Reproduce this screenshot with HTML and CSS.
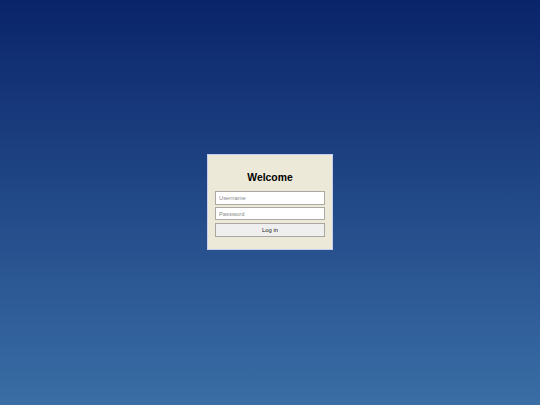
FILE: index.html
```html
<!DOCTYPE html>
<html>
<head>
<meta charset="utf-8">
<link rel="stylesheet" href="styles.css">
</head>
<body>
<div class="screen">
  <form class="card">
    <h2 class="title">Welcome</h2>
    <input class="field" type="text" placeholder="Username">
    <input class="field field-pass" type="password" placeholder="Password">
    <button class="btn" type="button">Log in</button>
  </form>
</div>
</body>
</html>
```
FILE: styles.css
```css
html, body {
  margin: 0;
  padding: 0;
}
body {
  font-family: "Liberation Sans", Arial, sans-serif;
}
.screen {
  width: 540px;
  height: 405px;
  background: linear-gradient(to bottom, #0a246a 0%, #3a6ea5 100%);
  display: flex;
  align-items: center;
  justify-content: center;
}
.card {
  box-sizing: border-box;
  width: 126px;
  height: 96px;
  margin-bottom: 1px;
  background: #ece9d8;
  border: 1px solid #c6cff0;
  padding: 7px 7px 12px;
  display: flex;
  flex-direction: column;
}
.title {
  margin: 10px 0 7px;
  font-size: 10.4px;
  line-height: 12px;
  font-weight: bold;
  text-align: center;
  color: #000;
}
.field {
  box-sizing: border-box;
  width: 110px;
  height: 14px;
  margin: 0;
  padding: 0 3px;
  border: 1px solid #aaa9a2;
  background: #fff;
  font-family: "Liberation Sans", Arial, sans-serif;
  font-size: 5.8px;
  color: #222;
  outline: none;
}
.field::placeholder {
  color: #8a8a8a;
}
.field-pass {
  margin-top: 2px;
}
.btn {
  box-sizing: border-box;
  width: 110px;
  height: 14px;
  margin: 3px 0 0;
  padding: 0;
  border: 1px solid #a9a7a0;
  background: #efefef;
  font-family: "Liberation Sans", Arial, sans-serif;
  font-size: 5.9px;
  color: #1a1a1a;
}
```
